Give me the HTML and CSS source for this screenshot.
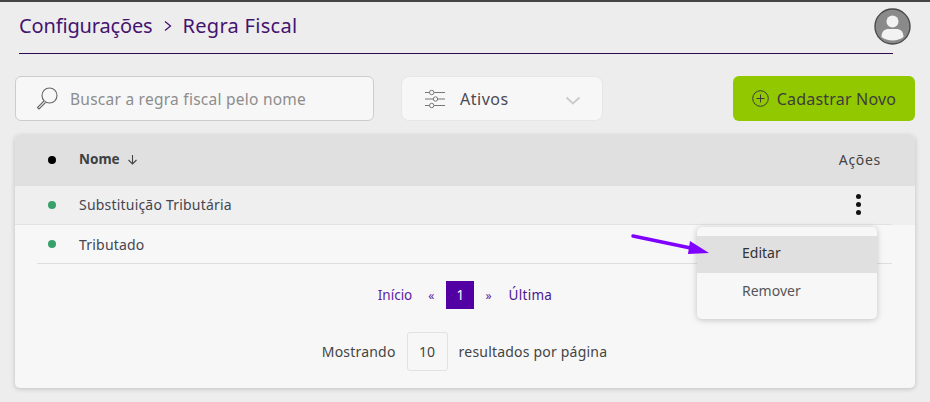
FILE: index.html
```html
<!DOCTYPE html>
<html lang="pt-BR">
<head>
    <meta charset="utf-8">
    <title>Regra Fiscal</title>
    <link rel="stylesheet" href="styles.css">
</head>
<body>
    <div class="page">
        <header class="topbar">
            <h1 class="crumbs">
                <span>Configurações</span>
                <svg class="crumb-sep" width="10" height="12" viewBox="0 0 10 12"><path d="M2 1.500 7.500 6 2 10.500" fill="none" stroke="#44136f" stroke-width="1.300"/></svg>
                <span class="crumb-last">Regra Fiscal</span>
            </h1>
            <svg class="avatar" width="37" height="37" viewBox="0 0 37 37">
                <circle cx="18.500" cy="18.500" r="17.500" fill="#8a8a8a" stroke="#4a4a4a" stroke-width="1.400"/>
                <circle cx="18.500" cy="13.500" r="6" fill="#f2f2f2"/>
                <path d="M7.500 29c0-6 3.500-8 7-8h8c3.500 0 7 2 7 8-3 2.200-6.500 3.500-11 3.500S10.500 31.200 7.500 29z" fill="#f2f2f2"/>
            </svg>
        </header>

        <div class="toolbar">
            <label class="search">
                <svg width="24" height="24" viewBox="0 0 24 24">
                    <circle cx="14.500" cy="8.500" r="7.500" fill="none" stroke="#666" stroke-width="1.100"/>
                    <path d="M9 14 2.500 20.500 4 22l6.500-6.500" fill="#fff" stroke="#666" stroke-width="1.100"/>
                </svg>
                <span>Buscar a regra fiscal pelo nome</span>
            </label>
            <div class="filter">
                <svg width="20" height="20" viewBox="0 0 20 20" fill="none" stroke="#777" stroke-width="1">
                    <path d="M0 3.500h4.500M9 3.500h11M0 10h8M13 10h7M0 16.500h4.500M9 16.500h11"/>
                    <circle cx="6.700" cy="3.500" r="2.200"/>
                    <circle cx="10.500" cy="10" r="2.200"/>
                    <circle cx="6.700" cy="16.500" r="2.200"/>
                </svg>
                <span class="filter-label">Ativos</span>
                <svg class="chevron" width="16" height="9" viewBox="0 0 16 9"><path d="M1.500 1.500 8 7.500l6.500-6" fill="none" stroke="#ccc" stroke-width="2"/></svg>
            </div>
            <button class="new-btn">
                <svg width="17" height="17" viewBox="0 0 17 17" fill="none" stroke="#3d3d3d" stroke-width="1">
                    <circle cx="8.500" cy="8.500" r="7.800"/>
                    <path d="M8.500 4.500v8M4.500 8.500h8"/>
                </svg>
                Cadastrar Novo
            </button>
        </div>

        <section class="card">
            <div class="row row-head">
                <span class="dot dot-black"></span>
                <span class="name">Nome
                    <svg width="11" height="11" viewBox="0 0 11 11"><path d="M5.500 1v9M1.500 6l4 4 4-4" fill="none" stroke="#444" stroke-width="1.100"/></svg>
                </span>
                <span class="acoes">Ações</span>
            </div>
            <div class="row row-hover">
                <span class="dot"></span>
                <span class="name">Substituição Tributária</span>
                <span class="kebab"><i></i><i></i><i></i></span>
            </div>
            <div class="row row-plain">
                <span class="dot"></span>
                <span class="name">Tributado</span>
            </div>

            <nav class="pager">
                <a>Início</a>
                <a class="arrow prev">«</a>
                <a class="current">1</a>
                <a class="arrow next">»</a>
                <a class="last">Última</a>
            </nav>
            <div class="per-page">
                <span>Mostrando</span>
                <span class="per-box">10</span>
                <span>resultados por página</span>
            </div>
        </section>

        <div class="menu">
            <div class="menu-item active">Editar</div>
            <div class="menu-item">Remover</div>
        </div>

        <svg class="pointer" width="80" height="22" viewBox="0 0 80 22">
            <path d="M2 2 62 14.500" stroke="#7f00ff" stroke-width="3.400" stroke-linecap="round"/>
            <path d="M59 7 78 19 57 20z" fill="#7f00ff"/>
        </svg>
    </div>
</body>
</html>
```
FILE: styles.css
```css
* {
    box-sizing: border-box;
}
html, body {
    margin: 0;
    height: 100%;
}
body {
    font-family: "Noto Sans", "Open Sans", sans-serif;
    background-color: #ededed;
    color: #444;
    overflow: hidden;
}
.page {
    position: relative;
    height: 402px;
    border-top: 2px solid #454545;
    padding: 0 15px;
}
.topbar {
    display: flex;
    align-items: center;
    justify-content: space-between;
    height: 52px;
    margin: 0 22px 0 4px;
    border-bottom: 1px solid #2c0b52;
}
.crumbs {
    display: flex;
    align-items: center;
    gap: 10px;
    margin: 0 0 4px;
    font-size: 20px;
    font-weight: 400;
    letter-spacing: -0.150px;
    color: #44136f;
}
.crumb-last {
    letter-spacing: 0.300px;
}
.avatar {
    margin: 0 -18px 3px 0;
}
.toolbar {
    display: flex;
    margin-top: 22px;
    height: 45px;
}
.search {
    display: flex;
    align-items: center;
    gap: 11px;
    width: 359px;
    padding-left: 19px;
    background-color: #f7f7f7;
    border: 1px solid #ccc;
    border-radius: 6px;
    color: #8d8d8d;
    font-size: 15.500px;
    letter-spacing: 0.250px;
}
.filter {
    display: flex;
    align-items: center;
    width: 202px;
    margin-left: 27px;
    padding: 0 21px 0 23px;
    background-color: #f7f7f7;
    border: 1px solid #e6e6e6;
    border-radius: 8px;
}
.filter-label {
    flex: 1;
    margin-left: 15px;
    font-size: 16px;
    letter-spacing: 0.500px;
    color: #4a4a55;
}
.chevron {
    margin-top: 4px;
}
.new-btn {
    display: flex;
    align-items: center;
    justify-content: center;
    gap: 8px;
    width: 182px;
    margin-left: auto;
    padding: 0;
    background-color: #92c800;
    border: 0;
    border-radius: 6px;
    font-family: inherit;
    font-size: 16px;
    letter-spacing: 0.200px;
    color: #3d3d3d;
}
.card {
    margin-top: 14px;
    height: 253px;
    background-color: #f7f7f7;
    border-radius: 5px;
    box-shadow: 0 1px 5px rgba(0, 0, 0, 0.2);
    overflow: hidden;
    font-size: 14px;
}
.row {
    display: flex;
    align-items: center;
    padding: 0 34px 0 33px;
}
.row-head {
    height: 51px;
    padding-bottom: 3px;
    background-color: #e0e0e0;
}
.row-hover {
    height: 39px;
    padding-bottom: 1px;
    background-color: #efefef;
    border-bottom: 1px solid #e2e2e2;
    margin-right: 23px;
    padding-right: 11px;
    box-shadow: 23px 0 0 #efefef;
}
.row-plain {
    height: 39px;
    margin: 0 23px 0 22px;
    padding-left: 11px;
    border-bottom: 1px solid #dedede;
}
.dot {
    width: 8px;
    height: 8px;
    border-radius: 50%;
    background-color: #37a06b;
}
.row-head .dot {
    margin-top: 2px;
}
.dot-black {
    background-color: #000;
}
.name {
    flex: 1;
    margin-left: 23px;
    color: #454550;
    letter-spacing: 0.200px;
}
.row-head .name {
    font-weight: 700;
    font-size: 13.500px;
    letter-spacing: 0;
    color: #3f3f3f;
}
.row-head svg {
    margin-left: 4px;
    vertical-align: -1px;
}
.acoes {
    font-size: 14px;
    letter-spacing: 0.700px;
}
.kebab {
    display: flex;
    flex-direction: column;
    gap: 3px;
    margin-right: 20px;
}
.kebab i {
    width: 5px;
    height: 5px;
    border-radius: 50%;
    background-color: #111;
}
.pager {
    display: flex;
    align-items: center;
    justify-content: center;
    margin-top: 17px;
    height: 28px;
    color: #5a1ea5;
    font-size: 13.500px;
}
.pager .arrow {
    font-size: 12px;
}
.pager .prev {
    margin: 0 12px 0 16px;
}
.pager .next {
    margin: 0 17px 0 11px;
}
.pager .current {
    width: 28px;
    height: 28px;
    line-height: 28px;
    text-align: center;
    color: #fff;
    background-color: #5200a3;
}
.pager .last {
    letter-spacing: 0.300px;
    color: #4b1790;
}
.per-page {
    display: flex;
    align-items: center;
    justify-content: center;
    gap: 11px;
    margin-top: 23px;
    padding-right: 1px;
    font-size: 14px;
    letter-spacing: 0.200px;
}
.per-box {
    width: 41px;
    height: 39px;
    line-height: 37px;
    text-align: center;
    border: 1px solid #e2e2e2;
    border-radius: 3px;
}
.menu {
    position: absolute;
    left: 697px;
    top: 225px;
    width: 180px;
    height: 92px;
    padding-top: 9px;
    background-color: #f7f7f7;
    border-radius: 5px;
    box-shadow: 0 1px 6px rgba(0, 0, 0, 0.22);
    font-size: 14px;
}
.menu-item {
    height: 37px;
    line-height: 35px;
    padding-left: 45px;
    color: #555;
}
.menu-item.active {
    line-height: 34px;
    background-color: #e0e0e0;
    color: #333;
}
.pointer {
    position: absolute;
    left: 631px;
    top: 232px;
}
```
